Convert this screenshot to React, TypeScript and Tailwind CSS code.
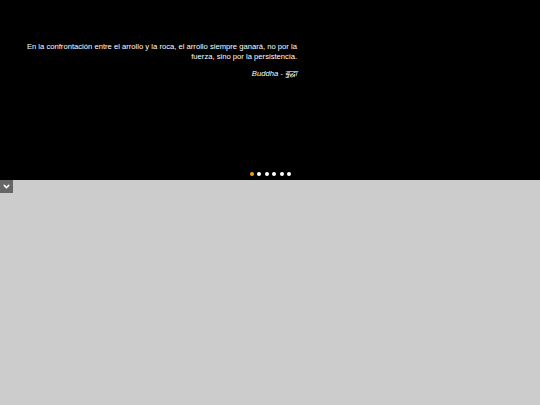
import { ChevronDown } from "lucide-react";

export default function App() {
  const dots = [0, 1, 2, 3, 4, 5];
  return (
    <div className="w-[540px] h-[405px] bg-[#cccccc] font-['Liberation_Sans',Arial,sans-serif]">
      {/* Quote slider */}
      <div className="h-[180px] bg-black flex flex-col">
        <div className="pt-[42px] pl-[25px]">
          <div className="w-[272px] text-right text-white text-[7.65px] leading-[9.5px]">
            <p>
              En la confrontación entre el arrollo y la roca, el arrollo siempre ganará, no por la fuerza, sino por la
              persistencia.
            </p>
            <p className="italic mt-[8px]">Buddha - बुद्धा</p>
          </div>
        </div>
        <div className="mt-auto mb-[4px] flex justify-center gap-[3.5px] pl-[1px]">
          {dots.map((i) => (
            <span
              key={i}
              className={
                "block w-[4px] h-[4px] rounded-full " + (i === 0 ? "bg-[#f0a020]" : "bg-white")
              }
            />
          ))}
        </div>
      </div>

      <button className="w-[13px] h-[13px] bg-[#666666] flex items-center justify-center">
        <ChevronDown className="w-[9px] h-[9px] text-white" strokeWidth={4} />
      </button>
    </div>
  );
}
